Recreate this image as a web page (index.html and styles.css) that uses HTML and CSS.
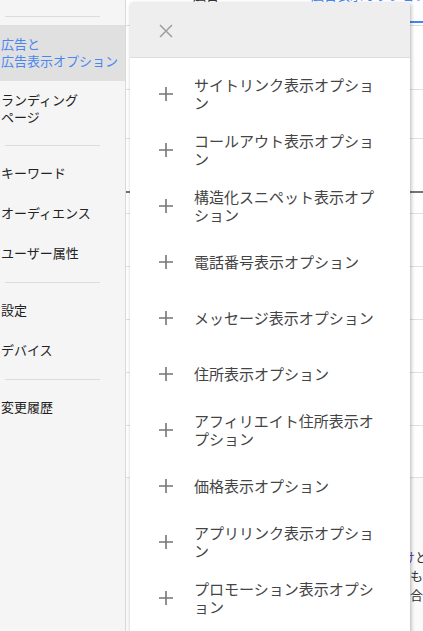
FILE: index.html
```html
<!DOCTYPE html>
<html lang="ja">
<head>
<meta charset="utf-8">
<title>広告表示オプション</title>
<link rel="stylesheet" href="styles.css">
</head>
<body>
<div class="app">
  <nav class="sidebar">
    <hr class="divider">
    <div class="group">
      <div class="item two selected">広告と<br>広告表示オプション</div>
      <div class="item two">ランディング<br>ページ</div>
    </div>
    <hr class="divider">
    <div class="group">
      <div class="item">キーワード</div>
      <div class="item">オーディエンス</div>
      <div class="item">ユーザー属性</div>
    </div>
    <hr class="divider">
    <div class="group">
      <div class="item">設定</div>
      <div class="item">デバイス</div>
    </div>
    <hr class="divider">
    <div class="group">
      <div class="item">変更履歴</div>
    </div>
  </nav>
  <main class="main">
    <div class="tabs">
      <span class="tab">広告</span>
      <span class="tab active">広告表示オプション</span>
    </div>
    <div class="rows">
      <div class="row r0"></div>
      <div class="row r1"></div>
      <div class="row r2 thick"></div>
      <div class="row r3"></div>
      <div class="row r4"></div>
      <div class="row r4"></div>
      <div class="row r4"></div>
      <div class="row r4"></div>
      <div class="row r8"></div>
      <div class="row last">
        <p class="note"><span class="line first"><span class="link">け</span>と</span><span class="line">も</span><span class="line">合</span></p>
      </div>
    </div>
    <section class="panel">
      <header class="panel-head">
        <svg class="close" width="14" height="14" viewBox="0 0 14 14"><path d="M1 1L13 13M13 1L1 13" stroke="#9e9e9e" stroke-width="1.5" fill="none"/></svg>
      </header>
      <ul class="options">
        <li class="opt"><svg class="plus" width="14" height="14" viewBox="0 0 14 14"><path d="M7 0V14M0 7H14" stroke="#757575" stroke-width="1.6"/></svg><span class="label">サイトリンク表示オプション</span></li>
        <li class="opt"><svg class="plus" width="14" height="14" viewBox="0 0 14 14"><path d="M7 0V14M0 7H14" stroke="#757575" stroke-width="1.6"/></svg><span class="label">コールアウト表示オプション</span></li>
        <li class="opt"><svg class="plus" width="14" height="14" viewBox="0 0 14 14"><path d="M7 0V14M0 7H14" stroke="#757575" stroke-width="1.6"/></svg><span class="label">構造化スニペット表示オプション</span></li>
        <li class="opt"><svg class="plus" width="14" height="14" viewBox="0 0 14 14"><path d="M7 0V14M0 7H14" stroke="#757575" stroke-width="1.6"/></svg><span class="label">電話番号表示オプション</span></li>
        <li class="opt"><svg class="plus" width="14" height="14" viewBox="0 0 14 14"><path d="M7 0V14M0 7H14" stroke="#757575" stroke-width="1.6"/></svg><span class="label">メッセージ表示オプション</span></li>
        <li class="opt"><svg class="plus" width="14" height="14" viewBox="0 0 14 14"><path d="M7 0V14M0 7H14" stroke="#757575" stroke-width="1.6"/></svg><span class="label">住所表示オプション</span></li>
        <li class="opt"><svg class="plus" width="14" height="14" viewBox="0 0 14 14"><path d="M7 0V14M0 7H14" stroke="#757575" stroke-width="1.6"/></svg><span class="label">アフィリエイト住所表示オプション</span></li>
        <li class="opt"><svg class="plus" width="14" height="14" viewBox="0 0 14 14"><path d="M7 0V14M0 7H14" stroke="#757575" stroke-width="1.6"/></svg><span class="label">価格表示オプション</span></li>
        <li class="opt"><svg class="plus" width="14" height="14" viewBox="0 0 14 14"><path d="M7 0V14M0 7H14" stroke="#757575" stroke-width="1.6"/></svg><span class="label">アプリリンク表示オプション</span></li>
        <li class="opt"><svg class="plus" width="14" height="14" viewBox="0 0 14 14"><path d="M7 0V14M0 7H14" stroke="#757575" stroke-width="1.6"/></svg><span class="label">プロモーション表示オプション</span></li>
      </ul>
    </section>
  </main>
</div>
</body>
</html>
```
FILE: styles.css
```css
html, body {
  margin: 0;
  padding: 0;
  height: 631px;
  overflow: hidden;
  background: #ffffff;
  font-family: "Noto Sans CJK JP", "Noto Sans", sans-serif;
}

.app {
  display: flex;
  height: 631px;
}

.sidebar {
  width: 125px;
  flex: none;
  background: #f5f5f5;
  border-right: 1px solid #d9d9d9;
  padding-top: 16px;
  box-sizing: content-box;
  font-size: 13px;
  color: #222222;
}

.divider {
  margin: 0 0 0 5px;
  width: 95px;
  height: 1px;
  border: 0;
  background: #dcdcdc;
}

.group {
  padding: 8px 0;
}

.item {
  height: 40px;
  display: flex;
  align-items: center;
  padding-left: 1px;
  padding-bottom: 3px;
  box-sizing: border-box;
  line-height: 17px;
  white-space: nowrap;
}

.item.two {
  height: 56px;
  padding-bottom: 3px;
}

.item.selected {
  background: #e0e0e0;
  color: #4a86f0;
}

.main {
  flex: 1;
  position: relative;
  overflow: hidden;
}

.tabs {
  height: 25px;
  border-bottom: 1px solid #dddddd;
  display: flex;
  overflow: hidden;
  font-size: 13px;
}

.tab {
  display: block;
  margin-top: -14px;
  line-height: 17px;
  height: 37px;
  color: #333333;
  padding-left: 67px;
  white-space: nowrap;
}

.tab.active {
  color: #4285f4;
  padding-left: 92px;
  flex: 1;
  border-bottom: 2px solid #4285f4;
  box-sizing: border-box;
}

.row {
  border-bottom: 1px solid #e0e0e0;
}

.r0 { height: 63px; }
.r1 { height: 48px; }
.r2 { height: 52px; }
.thick { border-bottom: 2px solid #757575; }
.r3 { height: 20px; }
.r4 { height: 52px; }
.r8 { height: 51px; }

.row.last {
  border: 0;
  height: 160px;
  background: #fafafa;
}

.note {
  margin: 0;
  padding-top: 69px;
  font-size: 13px;
  line-height: 19px;
  color: #333333;
  white-space: nowrap;
}

.line {
  display: block;
  padding-left: 284px;
}

.line.first {
  padding-left: 276px;
}

.link {
  color: #6a3fb0;
}

.panel {
  position: absolute;
  left: 4px;
  top: 3px;
  width: 280px;
  height: 720px;
  background: #ffffff;
  box-shadow: 1px 1px 4px rgba(0, 0, 0, 0.3);
  z-index: 2;
}

.panel-head {
  height: 55px;
  background: #eeeeee;
  border-bottom: 1px solid #dedede;
  display: flex;
  align-items: center;
  padding-left: 29px;
  box-sizing: border-box;
}

.close {
  display: block;
  margin-top: 1px;
}

.options {
  list-style: none;
  margin: 0;
  padding: 8px 0 0 0;
}

.opt {
  height: 56px;
  display: flex;
  align-items: center;
  padding-left: 29px;
}

.plus {
  flex: none;
  display: block;
}

.label {
  margin-left: 21px;
  width: 190px;
  font-size: 15px;
  line-height: 18px;
  color: #444444;
  word-break: break-all;
}
```
